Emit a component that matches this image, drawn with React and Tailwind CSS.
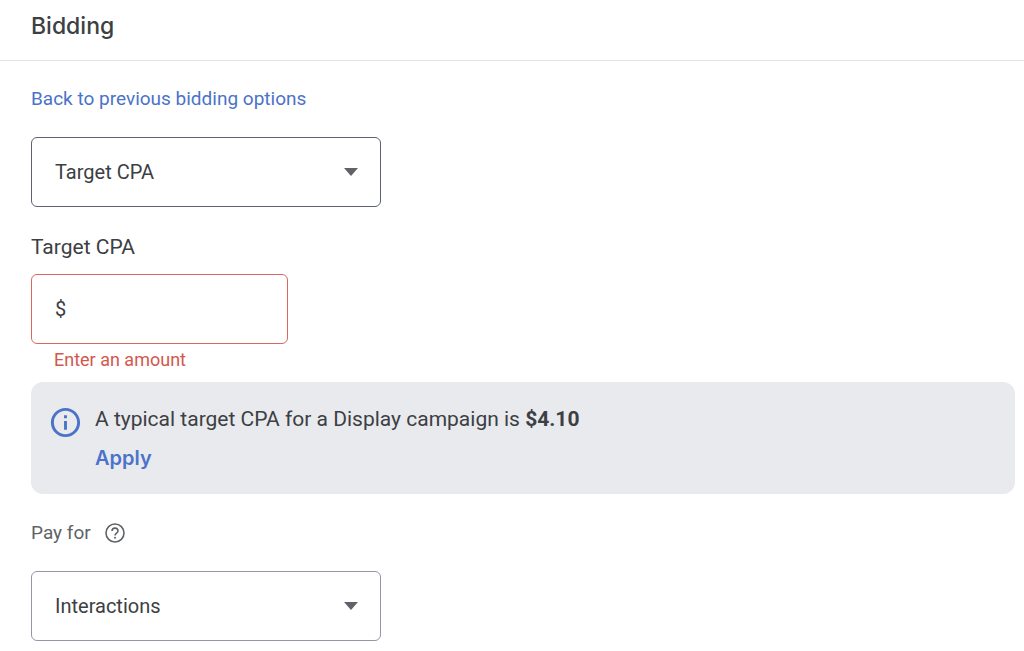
import React, { useState } from 'react'
import { MdInfoOutline } from 'react-icons/md'

function HelpIcon() {
  return (
    <svg
      viewBox="0 0 20 20"
      className="w-5 h-5"
      fill="none"
      stroke="currentColor"
      strokeWidth="1.6"
      aria-hidden="true"
    >
      <circle cx="10" cy="10" r="9" />
      <path d="M7 8.1a3 3 0 0 1 6 0c0 2-3 2.2-3 4.4" />
      <circle cx="10" cy="14.7" r="1" fill="currentColor" stroke="none" />
    </svg>
  )
}

function SelectBox({ id, value, onChange, options, className, ...props }) {
  return (
    <div className="relative w-full max-w-[350px]">
      <select
        id={id}
        value={value}
        onChange={(e) => onChange(e.target.value)}
        className={`block w-full h-[70px] pl-[23px] pr-14 appearance-none rounded-md border bg-white text-[20px] text-[#3c4043] ${className}`}
        {...props}
      >
        {options.map((o) => (
          <option key={o}>{o}</option>
        ))}
      </select>
      <svg
        viewBox="0 0 14 8"
        className="absolute right-[23px] top-[31px] w-[14px] h-2 fill-[#5f6368] pointer-events-none"
        aria-hidden="true"
      >
        <path d="M0 0h14L7 8z" />
      </svg>
    </div>
  )
}

function AmountField({ id, value, onChange }) {
  return (
    <>
      <div className="flex items-center w-full max-w-[257px] h-[70px] px-[23px] rounded-md border border-[#d9685f] text-[20px]">
        <span>$</span>
        <input
          id={id}
          type="text"
          inputMode="decimal"
          value={value}
          onChange={(e) => onChange(e.target.value)}
          aria-invalid={!value}
          aria-describedby={`${id}-error`}
          className="flex-1 min-w-0 ml-2 bg-transparent outline-none"
        />
      </div>
      <p id={`${id}-error`} className="mt-1 ml-[23px] text-[18px] leading-6 text-[#d3574d]">
        Enter an amount
      </p>
    </>
  )
}

export default function App() {
  const [strategy, setStrategy] = useState('Target CPA')
  const [amount, setAmount] = useState('')
  const [payFor, setPayFor] = useState('Interactions')

  return (
    <div className="min-h-screen bg-white font-['Roboto',sans-serif] text-[21px] leading-7 text-[#3c4043]">
      <header className="pl-[31px] pt-[10px] pb-[18px] border-b border-[#e3e4e8]">
        <h1 className="font-['Inter',sans-serif] text-[23px] leading-8 font-medium">Bidding</h1>
      </header>

      <main className="pl-[31px] pr-[9px] pt-6 pb-[10px]">
        <a href="#options" className="block w-fit text-[19px] text-[#4a73c9]">
          Back to previous bidding options
        </a>

        <div className="mt-6">
          <SelectBox
            id="strategy"
            aria-label="Bid strategy"
            value={strategy}
            onChange={setStrategy}
            options={['Target CPA', 'Target ROAS', 'Maximize conversions']}
            className="border-[#5c6273]"
          />
        </div>

        <label htmlFor="amount" className="block w-fit mt-[26px] mb-[13px]">
          Target CPA
        </label>
        <AmountField id="amount" value={amount} onChange={setAmount} />

        <section className="flex gap-3 mt-[10px] pl-[17px] pr-6 pt-[23px] pb-[22px] rounded-xl bg-[#e9eaee]">
          <MdInfoOutline className="shrink-0 w-[35px] h-[35px] text-[#4a73c9]" />
          <div>
            <p>
              A typical target CPA for a Display campaign is <b className="font-bold">$4.10</b>
            </p>
            <button
              type="button"
              onClick={() => setAmount('4.10')}
              className="block mt-[11px] font-['Inter',sans-serif] text-[20px] font-semibold text-[#4a73c9] cursor-pointer"
            >
              Apply
            </button>
          </div>
        </section>

        <div className="flex items-center gap-[14px] mt-[25px] mb-6 text-[19px] text-[#5f6368]">
          <label htmlFor="pay-for">Pay for</label>
          <HelpIcon />
        </div>
        <SelectBox
          id="pay-for"
          value={payFor}
          onChange={setPayFor}
          options={['Interactions', 'Conversions']}
          className="border-[#9396a8]"
        />
      </main>
    </div>
  )
}
